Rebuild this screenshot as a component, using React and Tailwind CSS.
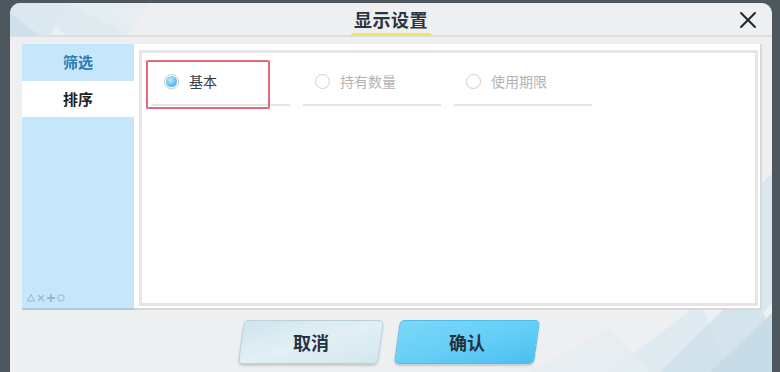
import { useState } from 'react'

const OPTIONS = [
  { key: 'basic', label: '基本' },
  { key: 'count', label: '持有数量' },
  { key: 'expire', label: '使用期限' },
]

function Radio({ checked }) {
  return checked ? (
    <span className="w-[15px] h-[15px] rounded-full border border-[#c9cdd0] bg-white flex items-center justify-center shadow-[0_1px_1px_rgba(0,0,0,0.08)]">
      <span className="w-[11px] h-[11px] rounded-full bg-[radial-gradient(circle_at_40%_35%,#bfeaff_0%,#62c3f4_55%,#2f9fe0_100%)]" />
    </span>
  ) : (
    <span className="w-[15px] h-[15px] rounded-full border-[1.5px] border-[#cfcfcf] bg-white" />
  )
}

function Decor() {
  return (
    <svg className="absolute inset-0 pointer-events-none" width="762" height="369" viewBox="0 0 762 369">
      {/* header pattern, left */}
      <polygon points="0,0 60,0 40,33 0,33" fill="#d6e6ef" opacity="0.8" />
      <polygon points="30,0 95,0 120,33 55,33" fill="#dde9f0" opacity="0.9" />
      <polygon points="60,0 140,0 118,33" fill="#e4edf2" opacity="0.9" />
      <polygon points="0,10 30,33 0,33" fill="#c9dde9" opacity="0.7" />
      {/* footer pattern, right */}
      <polygon points="600,369 690,300 720,369" fill="#dbe8ef" opacity="0.9" />
      <polygon points="650,369 740,280 762,330 762,369" fill="#cfe1eb" opacity="0.85" />
      <polygon points="700,369 762,310 762,369" fill="#c4dae6" opacity="0.9" />
      <polygon points="520,369 600,325 640,369" fill="#e3edf2" opacity="0.8" />
      <polygon points="752,180 762,170 762,300 752,310" fill="#d6e6ef" opacity="0.9" />
    </svg>
  )
}

export default function App() {
  const [sel, setSel] = useState('basic')
  const [tab, setTab] = useState('sort')

  return (
    <div className="w-[780px] h-[372px] overflow-hidden bg-[#4c585e] pt-[3px] pl-[10px] pr-[8px] font-['Noto_Sans_CJK_SC','Noto_Sans',sans-serif]">
      <div className="relative h-[369px] rounded-t-[10px] bg-[#eeeff0] overflow-hidden flex flex-col">
        <Decor />

        {/* Header */}
        <div className="relative h-[34px] shrink-0 border-b-2 border-[#dcdee0] flex items-center justify-center">
          <div className="relative h-full flex flex-col items-center">
            <span className="text-[18px] leading-[30px] font-bold text-[#2a3541] tracking-[0.5px] pt-[1px]">显示设置</span>
            <span className="absolute bottom-[-1px] w-[80px] h-[3px] bg-[#f4e35e] rounded-full" />
          </div>
          <button className="absolute right-[12px] top-[5px] w-[24px] h-[24px] flex items-center justify-center">
            <svg width="18" height="18" viewBox="0 0 18 18">
              <path d="M2 2 L16 16 M16 2 L2 16" stroke="#1e2830" strokeWidth="2" strokeLinecap="round" />
            </svg>
          </button>
        </div>

        {/* Body */}
        <div className="relative flex h-[266px] mt-[7px] pl-[12px] pr-[10px] shrink-0">
          <div className="w-[112px] bg-[#c6e7fb] border-b-2 border-[#a9cde0] flex flex-col">
            <button onClick={() => setTab('filter')}
              className={`h-[37px] text-[15px] font-bold ${tab === 'filter' ? 'bg-white text-[#222]' : 'text-[#2a7cb3]'}`}>
              筛选
            </button>
            <button onClick={() => setTab('sort')}
              className={`h-[36px] text-[15px] font-bold ${tab === 'sort' ? 'bg-white text-[#222]' : 'text-[#2a7cb3]'}`}>
              排序
            </button>
            <div className="flex-1 flex items-end pl-[5px] pb-[5px]">
              <svg width="38" height="10" viewBox="0 0 38 10">
                <polygon points="4,1.5 7.5,8 0.5,8" fill="none" stroke="#94b9cc" strokeWidth="1" />
                <path d="M11 2 L17 8 M17 2 L11 8" stroke="#94b9cc" strokeWidth="1.3" />
                <path d="M24 1 L24 9 M20 5 L28 5" stroke="#94b9cc" strokeWidth="1.8" />
                <circle cx="34" cy="5" r="3.2" fill="none" stroke="#94b9cc" strokeWidth="1" />
              </svg>
            </div>
          </div>

          <div className="flex-1 bg-white pt-[6px] pl-[5px] pr-[2px] pb-[2px] border-r-2 border-b-2 border-[#d7d8d9]">
            <div className="h-full border-[3px] border-[#e5e5e5] bg-white pl-[10px]">
              <div className="flex gap-[13px]">
                {OPTIONS.map(o => (
                  <div key={o.key} onClick={() => setSel(o.key)}
                    className="relative w-[138px] h-[53px] border-b-2 border-[#e4e4e4] flex items-center pt-[5px] pl-[12px] gap-[10px] cursor-pointer">
                    <Radio checked={sel === o.key} />
                    <span className={`text-[14px] ${sel === o.key ? 'text-[#3a3a3a]' : 'text-[#b3b3b3]'}`}>{o.label}</span>
                    {o.key === 'basic' && (
                      <span className="absolute left-[-6px] top-[7px] w-[124px] h-[49px] border-2 border-[#e06a78] rounded-[2px]" />
                    )}
                  </div>
                ))}
              </div>
            </div>
          </div>
        </div>

        {/* Footer */}
        <div className="relative flex-1 flex items-start justify-center gap-[16px] pt-[10px] pr-[4px]">
          <button className="w-[140px] h-[44px] -skew-x-[8deg] rounded-[5px] border border-[#b9d0d9] bg-gradient-to-br from-[#cfe5ee] via-[#e2eff4] to-[#d4e7ee] shadow-[0_2px_2px_rgba(0,0,0,0.15)] flex items-center justify-center">
            <span className="skew-x-[8deg] text-[18px] font-bold text-[#26323d]">取消</span>
          </button>
          <button className="w-[140px] h-[44px] -skew-x-[8deg] rounded-[5px] border border-[#4fbde8] bg-gradient-to-br from-[#7ad8f8] via-[#66cff6] to-[#49bff2] shadow-[0_2px_2px_rgba(0,0,0,0.15)] flex items-center justify-center">
            <span className="skew-x-[8deg] text-[18px] font-bold text-[#26323d]">确认</span>
          </button>
        </div>
      </div>
    </div>
  )
}
